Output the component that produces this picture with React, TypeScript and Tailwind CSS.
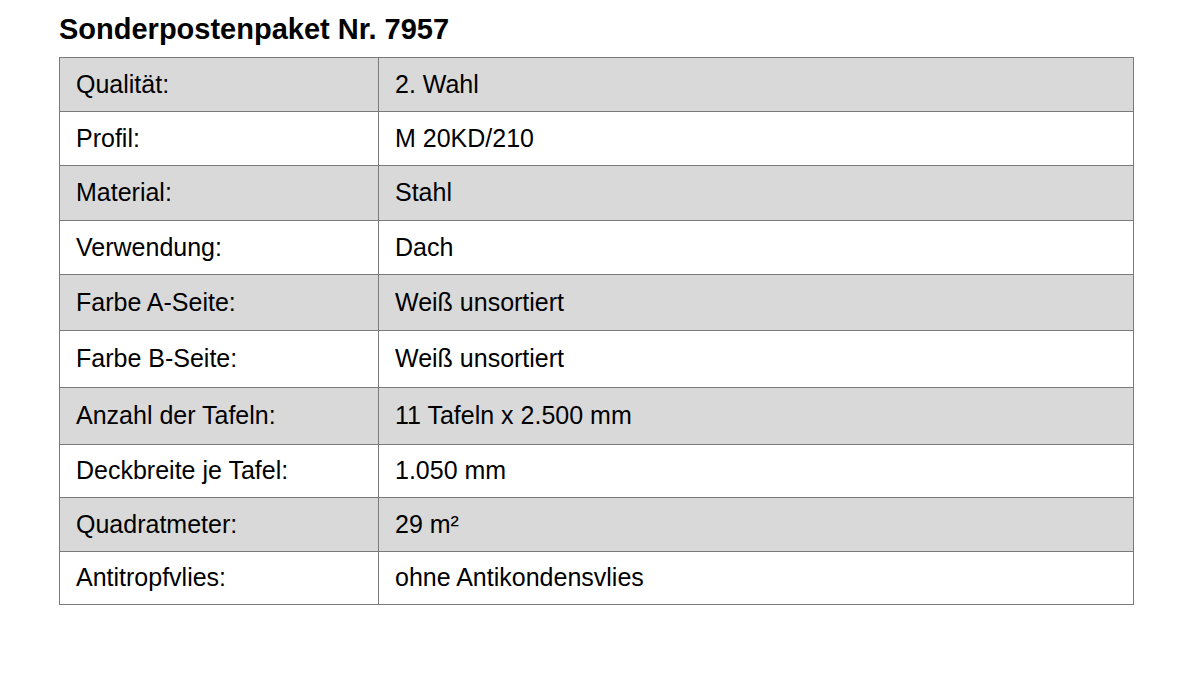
import React from 'react';

const rows: { label: string; value: string; h: string }[] = [
  { label: 'Qualität:', value: '2. Wahl', h: 'h-[54px]' },
  { label: 'Profil:', value: 'M 20KD/210', h: 'h-[54px]' },
  { label: 'Material:', value: 'Stahl', h: 'h-[55px]' },
  { label: 'Verwendung:', value: 'Dach', h: 'h-[54px]' },
  { label: 'Farbe A-Seite:', value: 'Weiß unsortiert', h: 'h-[56px]' },
  { label: 'Farbe B-Seite:', value: 'Weiß unsortiert', h: 'h-[57px]' },
  { label: 'Anzahl der Tafeln:', value: '11 Tafeln x 2.500 mm', h: 'h-[57px]' },
  { label: 'Deckbreite je Tafel:', value: '1.050 mm', h: 'h-[53px]' },
  { label: 'Quadratmeter:', value: '29 m²', h: 'h-[54px]' },
  { label: 'Antitropfvlies:', value: 'ohne Antikondensvlies', h: 'h-[53px]' },
];

export default function App() {
  return (
    <div className="w-[1200px] h-[680px] bg-white text-black font-['Liberation_Sans',Arial,sans-serif]">
      <div className="pl-[59px] pt-[12px]">
        <h1 className="text-[29px] font-bold leading-[34px] h-[45px]">Sonderpostenpaket Nr. 7957</h1>
        <table className="w-[1075px] border-collapse border border-[#7a7a7a] text-[25px] leading-none">
          <tbody>
            {rows.map((r, i) => (
              <tr key={r.label} className={`${r.h} ${i % 2 === 0 ? 'bg-[#d9d9d9]' : 'bg-white'}`}>
                <td className="w-[319px] border border-[#7a7a7a] px-[16px] pb-[1px] align-middle">{r.label}</td>
                <td className="border border-[#7a7a7a] px-[16px] pb-[1px] align-middle">{r.value}</td>
              </tr>
            ))}
          </tbody>
        </table>
      </div>
    </div>
  );
}
